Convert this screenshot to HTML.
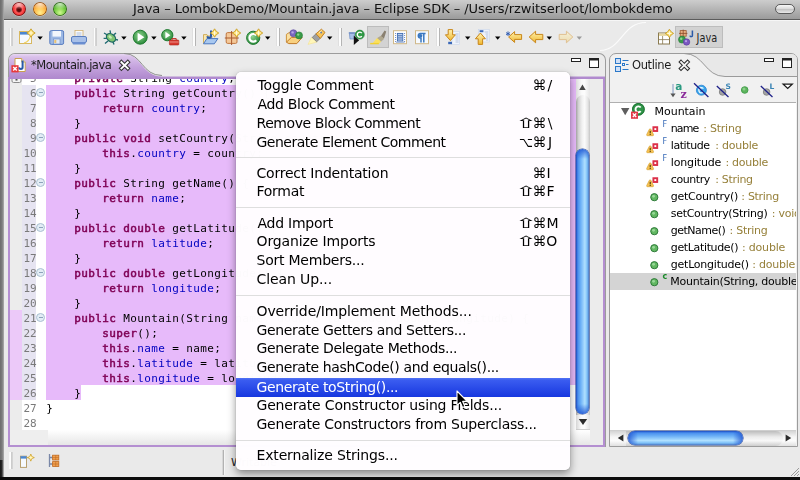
<!DOCTYPE html>
<html><head><meta charset="utf-8"><title>Java - LombokDemo/Mountain.java - Eclipse SDK</title>
<style>
*{box-sizing:border-box;margin:0;padding:0}
html,body{width:800px;height:480px;overflow:hidden;background:#e9e9e9}
body{font-family:"DejaVu Sans","Liberation Sans",sans-serif;color:#000}
.abs{position:absolute}
#menu,#edbody,#oltree,#title,#tablabel,#oltitle{will-change:transform}
i{font-style:normal}
#root{position:absolute;left:0;top:0;width:800px;height:480px;overflow:hidden;background:#eaeaea}
#titlebar{left:0;top:0;width:800px;height:20px;background:linear-gradient(#cdcdcd,#9b9b9b);border-bottom:1px solid #5c5c5c;box-shadow:0 1px 0 #f6f6f6}
#title{top:-0.6px;font-size:13px;line-height:19px;color:#111;white-space:nowrap;left:133.00px;letter-spacing:-0.071px}
.tl{position:absolute;top:2.2px;width:14px;height:14px;border-radius:50%}
#pill{left:774.5px;top:4px;width:20.5px;height:10px;border-radius:5px;border:1px solid #5a5a5a;background:linear-gradient(#f8f8f8,#d8d8d8 50%,#c4c4c4 55%,#e8e8e8)}
#leftedge{left:0;top:0;width:4px;height:480px;background:linear-gradient(to right,#6c6c6c,#7c7c7c 50%,#9a9a9a 85%,#c8c8c8)}
#bottomedge{left:0;top:477.3px;width:800px;height:3px;background:#0c0c0c}
/* editor */
#edframe{left:8px;top:53px;width:597.5px;height:394px;border:1px solid #9c9c9c;border-bottom:none;border-radius:7px 7px 0 0;background:#ebebeb;overflow:hidden}
#edpurple{left:8px;top:76.6px;width:597px;height:370.2px;background:#b48fd1}
#edbody{left:10px;top:79px;width:593px;height:366px;background:#fff;overflow:hidden}
#ruler{left:0;top:0;width:12px;height:366px;background:#ececec}
#numcol{left:12px;top:0;width:26px;height:366px;background:#fff}
#gutterbot{left:0;top:351px;width:38px;height:15px;background:#eee}
#edbot{left:38px;top:351px;width:555px;height:15px;background:linear-gradient(#fff,#e6e6e6)}
.row{position:absolute;left:0;width:566px;height:15px;line-height:15px;font-family:"DejaVu Sans Mono","Liberation Mono",monospace;font-size:11px;letter-spacing:.378px;white-space:pre}
.row .sel{position:absolute;top:0;height:15px;background:#e7bafa}
.row .lnbg{position:absolute;left:12px;top:0;width:14px;height:15px;background:#e6e4f1}
.row .num{position:absolute;top:1px;left:4.7px;width:22px;text-align:right;color:#7a7a7a;letter-spacing:-0.0px}
.row .tx{position:absolute;left:36.3px;top:1px}
.row .fold{position:absolute;left:26.3px;top:3px;width:9px;height:9px;border-radius:50%;border:1px solid #a9c0d2;background:#e3edf5}
.row .fold:after{content:"";position:absolute;left:1.5px;top:3px;width:4px;height:1px;background:#8ca4ba}
.k{color:#7f0055;-webkit-text-stroke:.5px #7f0055}
.f{color:#0000c0}
/* menu */
#menu{left:236px;top:72px;width:334px;height:398px;background:rgba(255,253,255,0.988);border-radius:5px;box-shadow:0 4px 9px rgba(0,0,0,0.42),0 0 1px rgba(0,0,0,0.45);font-size:14px;color:#000}
.mi{position:absolute;left:0;width:334px;height:19px;line-height:19px;padding-left:21px;white-space:nowrap;letter-spacing:-0.27px}
.mi .g{position:absolute;top:0;letter-spacing:0;display:block}
.mi .key{position:absolute;left:311px;top:0;letter-spacing:0}
.sep{position:absolute;left:0;width:334px;height:1px;background:#dedede}
.hl{background:linear-gradient(#5272f4,#3a5cf0 12%,#1737df);color:#fff;margin-top:.7px}
/* outline */
#olframe{left:609px;top:53px;width:189px;height:394px;border:1px solid #9c9c9c;border-radius:7px 7px 0 0;background:#f1f1f1;overflow:hidden}
#oltree{left:610px;top:102px;width:186px;height:328px;background:#fff;border-top:1px solid #b0b0b0;overflow:hidden;font-size:11px}
.orow{position:absolute;left:0;width:190px;height:17px;line-height:17px;white-space:nowrap}
.orow .osel{position:absolute;left:0;top:0;width:190px;height:17px;background:#d4d4d4}
.orow .otx{position:absolute;top:0;letter-spacing:-0.25px}
.orow .ty{color:#96803a}
.orow .oic{position:absolute}
.orow .tri{position:absolute;left:10.6px;top:5.4px}
.orow .sup{position:absolute;left:52.4px;top:-4px;font-size:8px}
#tablabel{top:57.55px;font-size:11.5px;line-height:15px;color:#1c1c1c;white-space:nowrap;left:30.90px;letter-spacing:-0.485px}
#oltitle{top:57.55px;font-size:11.5px;line-height:15px;color:#1c1c1c;white-space:nowrap;left:632.00px;letter-spacing:-0.4px}
/* status */
</style></head><body><div id="root">
<div id="titlebar" class="abs"></div>
<div id="title" class="abs">Java – LombokDemo/Mountain.java – Eclipse SDK – /Users/rzwitserloot/lombokdemo</div>
<i class="tl" style="left:11.5px;background:radial-gradient(ellipse 60% 38% at 50% 14%,rgba(255,255,255,.7),rgba(255,255,255,0) 100%),radial-gradient(circle at 50% 54%,#4a0808 0,#6a1010 20%,#ff5a5a 34%,#f03030 55%,#c01818 80%,#8a0e0e 100%);box-shadow:0 0 0 .8px #6a1414 inset,0 .5px 0 rgba(255,255,255,.5)"></i>
<i class="tl" style="left:32.5px;background:radial-gradient(ellipse 60% 38% at 50% 14%,rgba(255,255,255,.75),rgba(255,255,255,0) 100%),radial-gradient(circle at 50% 75%,#fff090 0,#ffc050 40%,#f09028 70%,#b05a10 100%);box-shadow:0 0 0 .8px #8a4a10 inset,0 .5px 0 rgba(255,255,255,.5)"></i>
<i class="tl" style="left:53.2px;background:radial-gradient(ellipse 60% 38% at 50% 14%,rgba(255,255,255,.7),rgba(255,255,255,0) 100%),radial-gradient(circle at 50% 75%,#d0f890 0,#7cd048 40%,#48a828 70%,#226014 100%);box-shadow:0 0 0 .8px #2a5a18 inset,0 .5px 0 rgba(255,255,255,.5)"></i>
<div id="pill" class="abs"></div>
<div id="leftedge" class="abs"></div><div class="abs" style="left:0;top:459.5px;width:3.2px;height:21px;background:linear-gradient(to right,#161616,#2a2a2a 70%,#8a8a8a)"></div>
<svg class="abs" style="left:0;top:21px" width="800" height="33" viewBox="0 21 800 33">
<defs>
<linearGradient id="gy" x1="0" y1="0" x2="0" y2="1"><stop offset="0" stop-color="#fff2b0"/><stop offset="1" stop-color="#f0b830"/></linearGradient>
<linearGradient id="gyf" x1="0" y1="0" x2="0" y2="1"><stop offset="0" stop-color="#f6f0d8"/><stop offset="1" stop-color="#ecdcb0"/></linearGradient>
<radialGradient id="gg" cx=".45" cy=".4" r=".6"><stop offset="0" stop-color="#8fd48f"/><stop offset="1" stop-color="#2a8a3a"/></radialGradient>
<linearGradient id="gb" x1="0" y1="0" x2="0" y2="1"><stop offset="0" stop-color="#a8c4ea"/><stop offset="1" stop-color="#5a86c8"/></linearGradient>
<g id="hd"><rect x="0" y="0" width="2" height="18" fill="#fdfdfd"/><rect x="2" y="0" width="1" height="18" fill="#b4b4b4"/><rect x="-.6" y="0" width=".6" height="18" fill="#d8d8d8"/></g>
<path id="dd" d="M0 0h5.4l-2.7 3.4z"/>
<g id="spark"><path d="M0 -4.2L1.7 -1.7L4.2 0L1.7 1.7L0 4.2L-1.7 1.7L-4.2 0L-1.7 -1.7z" fill="#fbd858" stroke="#c49a28" stroke-width=".8" stroke-linejoin="round"/><path d="M0 -2.2v4.4M-2.2 0h4.4" stroke="#fffbe0" stroke-width="1.1"/></g>
</defs>
<!-- handles -->
<use href="#hd" x="9.5" y="28"/><use href="#hd" x="93.5" y="28"/><use href="#hd" x="193" y="28"/><use href="#hd" x="277" y="28"/><use href="#hd" x="339" y="28"/><use href="#hd" x="437" y="28"/>
<!-- new -->
<rect x="19.5" y="31.5" width="12" height="12" fill="#f4f9ff" stroke="#d8b860" stroke-width="1"/><rect x="20" y="32" width="11" height="2.6" fill="#4a86d0"/><path d="M24 43c4-1 6-4 6.5-8" fill="none" stroke="#f0d060" stroke-width="1.2"/>
<use href="#spark" x="31" y="33"/>
<use href="#dd" x="37.4" y="36.4"/>
<!-- save -->
<rect x="49.8" y="30.6" width="13.8" height="13.8" rx="1.5" fill="#9cb8e4" stroke="#5a7ec0" stroke-width="1"/><rect x="52.5" y="31" width="8.5" height="5.6" fill="#f2f6fc"/><rect x="53.5" y="39" width="6.5" height="5" fill="#dfe8f6" stroke="#6a8ac4" stroke-width=".6"/><rect x="54.3" y="40" width="2" height="3" fill="#e8c070"/>
<!-- print -->
<rect x="75" y="30.5" width="8" height="7" fill="#fafafa" stroke="#d0b070" stroke-width=".8"/><path d="M76.5 33h5M76.5 35h5" stroke="#9ab0d8" stroke-width=".8"/><rect x="71.5" y="36.5" width="15" height="6" rx="1.5" fill="#a8c0e8" stroke="#5a7ec0" stroke-width="1"/><rect x="72.5" y="42" width="13" height="2.6" rx="1" fill="#6a8ed0"/>
<!-- debug bug -->
<g stroke="#1f6a72" stroke-width="1.35" fill="none"><path d="M104 33l3.5 2M103.6 38.4h3.6M105 43.6l3-2.6M110 30.4l.6 3.2M116 33l-2 1.6M118 40l-3-.6M114 44.6l-1.2-3"/></g>
<ellipse cx="111" cy="37.8" rx="5" ry="3.7" transform="rotate(38 111 37.8)" fill="#80c472" stroke="#1f6a62" stroke-width="1.3"/><ellipse cx="110.2" cy="37" rx="2" ry="1.2" transform="rotate(38 110.2 37)" fill="#c8ecb8"/>
<use href="#dd" x="121.2" y="36.4"/>
<!-- run -->
<circle cx="140.2" cy="37.2" r="7" fill="url(#gg)" stroke="#1f7a30" stroke-width="1"/><path d="M137.6 32.8v8.8l6.8-4.4z" fill="#fff"/>
<use href="#dd" x="151.2" y="36.4"/>
<!-- run ext -->
<circle cx="167.3" cy="35.2" r="5.6" fill="url(#gg)" stroke="#1f7a30" stroke-width="1"/><path d="M165.4 31.8v6.8l5-3.4z" fill="#fff"/>
<rect x="169.4" y="40" width="9.4" height="5" rx=".8" fill="#d83a30" stroke="#a82018" stroke-width=".6"/><path d="M172 40v-1.4h4.2V40" fill="none" stroke="#c02a22" stroke-width="1"/><rect x="169.6" y="41.6" width="9" height=".8" fill="#f0a8a0"/>
<use href="#dd" x="181.2" y="36.4"/>
<!-- new java project -->
<path d="M203.5 43.6v-9h3.4l1 1.4h4v3" fill="#fbe8b0" stroke="#c8a040" stroke-width=".8"/><path d="M203.5 43.8l3.4-5.2h11l-3.6 5.2z" fill="#a8c8f0" stroke="#4a78c0" stroke-width="1"/><path d="M211 30.4v5.6c0 2.2-3.4 2.2-3.8 .2" fill="none" stroke="#2a5aa8" stroke-width="2"/>
<use href="#spark" x="214.6" y="33"/>
<!-- new package -->
<rect x="226.2" y="32.6" width="10.8" height="10.8" rx="1.4" fill="#f4c898" stroke="#c07840" stroke-width="1"/><path d="M231.6 31v14M224.8 38h14" stroke="#a85a30" stroke-width="1"/>
<use href="#spark" x="236.6" y="33"/>
<!-- new class -->
<circle cx="253.2" cy="37.8" r="6.6" fill="url(#gg)" stroke="#1f7a30" stroke-width="1"/><path d="M256.2 35.4a3.8 3.8 0 1 0 0 4.8" fill="none" stroke="#fff" stroke-width="2.2"/>
<use href="#spark" x="258.6" y="33"/>
<use href="#dd" x="265" y="36.4"/>
<!-- open type -->
<path d="M286.4 42v-7.6l4-2.6h6l-1 3.6" fill="#fbe0a0" stroke="#c88a30" stroke-width=".9"/><path d="M286.4 42.2l5-4.8h10.8l-5.4 6.2h-8z" fill="#f8d080" stroke="#c07a28" stroke-width="1"/>
<circle cx="293.4" cy="33.2" r="3.5" fill="#7a68c0" stroke="#5a48a0" stroke-width=".6"/><circle cx="292.6" cy="32.4" r="1.2" fill="#b8a8e8"/>
<circle cx="299" cy="35.4" r="3.5" fill="#3a9a4a" stroke="#1f7a30" stroke-width=".6"/><circle cx="298.2" cy="34.6" r="1.2" fill="#8fd48f"/>
<!-- flashlight -->
<path d="M308 44.4l3.6-7.4 5.6 5z" fill="#fff6b8" stroke="#f4e090" stroke-width=".6"/><path d="M312.2 37.4l3.8-3.6 4.4 4.4-3.8 3.6z" fill="#a0a0a0" stroke="#6e6e6e" stroke-width=".7"/><path d="M316 33.8l5.4-4.6 3.6 3.2-4.6 6z" fill="#f7c45a" stroke="#c08228" stroke-width="1" stroke-linejoin="round"/><path d="M319 32.8l2.6-2.2" stroke="#fff0c0" stroke-width="1"/><rect x="320.4" y="31.8" width="1.5" height="1.5" fill="#4a78c0"/>
<use href="#dd" x="327" y="36.4"/>
<!-- toggle C -->
<path d="M349.4 33.4h5.4l-.6 5.6h-4.2z" fill="#a8c0e8" stroke="#6a8ac4" stroke-width=".7"/><rect x="348.8" y="32.2" width="6.6" height="1.4" fill="#6a8ac4"/>
<path d="M353.8 35.6v9.4l5.4-4.7z" fill="#111"/>
<circle cx="359.8" cy="34.6" r="4.5" fill="#2f9a45" stroke="#1f7a30" stroke-width=".6"/><path d="M361.8 33.1a2.5 2.5 0 1 0 0 3" fill="none" stroke="#fff" stroke-width="1.4"/>
<!-- mark occurrences (pressed) -->
<rect x="367.5" y="26.5" width="21" height="21" fill="#d3d3d3" stroke="#bcbcbc" stroke-width="1"/>
<path d="M380.6 36.6l4-6 1.6 1-2.2 7z" fill="#8a8070"/><path d="M376.8 38.2l4-2.4 3.4 3-3.4 3.2z" fill="#b0a890"/><path d="M372 44l5-6 4 3.6-2 2.4z" fill="#fbe060"/><path d="M370.2 43.6h8.6" stroke="#f0d030" stroke-width="1.4"/>
<!-- block selection -->
<rect x="393.5" y="30.7" width="13" height="13" fill="#fff" stroke="#d0b888" stroke-width="1"/><rect x="397.4" y="33.4" width="5.4" height="7.6" fill="#c8d8f0" stroke="#3a68b0" stroke-width=".9"/><path d="M398 35.4h4.4M398 37.2h4.4M398 39h4.4" stroke="#3a68b0" stroke-width=".8"/><path d="M395.6 33v9M404.6 33v9" stroke="#6a8ac4" stroke-width="1" stroke-dasharray="1 1"/><path d="M396 42.2h8.6" stroke="#6a8ac4" stroke-width=".8"/>
<!-- pilcrow -->
<rect x="415.5" y="30.7" width="13" height="13" fill="#f6faff" stroke="#d0b888" stroke-width="1"/><path d="M423 33.4h-2.4a2.3 2.3 0 0 0 0 4.6h.4v4.4M423.8 33.4v9M419.6 33.6h6" fill="none" stroke="#3a78c0" stroke-width="1.5"/><circle cx="420.6" cy="35.7" r="1.8" fill="#3a78c0"/>
<!-- next annotation -->
<rect x="452" y="31.6" width="7.6" height="13" fill="#eef3fa" stroke="#c8d4e8" stroke-width=".6"/><path d="M455.6 34h3M455.6 36h3M455.6 38h3M455.6 40h3M455.6 42h3" stroke="#a8b8d8" stroke-width=".8"/>
<path d="M448.2 29.6h4.4v5.2h2.8l-5 5.8-5-5.8h2.8z" fill="url(#gy)" stroke="#c8861a" stroke-width="1" stroke-linejoin="round"/><rect x="448.2" y="41.8" width="3.8" height="2.4" fill="#3a68b8"/>
<use href="#dd" x="465" y="36.4"/>
<!-- prev annotation -->
<rect x="478.6" y="29.4" width="10.6" height="12.6" fill="#eef3fa" stroke="#c8d4e8" stroke-width=".6"/><path d="M484.6 32h3.6M485.6 34h2.6M486 36h2.2M486 38h2.2M486 40h2.2" stroke="#a8b8d8" stroke-width=".8"/><rect x="479.6" y="30.2" width="3.8" height="2" fill="#3a68b8"/>
<path d="M480.4 33l5 5.8h-2.8v5.6h-4.4v-5.6h-2.8z" fill="url(#gy)" stroke="#c8861a" stroke-width="1" stroke-linejoin="round"/>
<use href="#dd" x="495" y="36.4"/>
<!-- last edit -->
<path d="M508.6 37l6-5.4v3h7v4.8h-7v3z" fill="url(#gy)" stroke="#c8861a" stroke-width="1" stroke-linejoin="round"/><path d="M508 31.4v4.6M506 32.6l4 2.3M506 34.9l4-2.3" stroke="#2a58b0" stroke-width=".9"/>
<!-- back -->
<path d="M529.2 37l6.4-5.8v3.2h7.2v5.2h-7.2v3.2z" fill="url(#gy)" stroke="#c8861a" stroke-width="1" stroke-linejoin="round"/>
<use href="#dd" x="546.6" y="36.4"/>
<!-- forward (disabled) -->
<path d="M572.8 37l-6.4-5.8v3.2h-7.2v5.2h7.2v3.2z" fill="url(#gyf)" stroke="#e0c090" stroke-width="1" stroke-linejoin="round"/>
<use href="#dd" x="576.6" y="36.4" fill="#9a9a9a"/>
<!-- perspective curve -->
<path d="M600 50.5C622 50 622 22.5 646 22.5" fill="none" stroke="#fbfbfb" stroke-width="1.2"/>
<!-- open perspective -->
<rect x="658.5" y="33" width="11" height="11" fill="#fff" stroke="#8a7a50" stroke-width="1"/><rect x="659" y="33.5" width="10" height="2.4" fill="#e8d8a0"/><path d="M662.6 36v8M659 39.6h10" stroke="#8a7a50" stroke-width=".8"/>
<use href="#spark" x="669.4" y="33.4"/>
<!-- Java perspective button -->
<rect x="675.5" y="26.5" width="47" height="21" fill="#d2d2d2" stroke="#bdbdbd" stroke-width="1"/>
<rect x="680.2" y="30.6" width="6" height="5.6" fill="#e8b080" stroke="#a05a30" stroke-width=".8"/><path d="M683.2 29.6v7.6M679 33.4h8.4" stroke="#8a4a28" stroke-width=".8"/>
<circle cx="682" cy="39.6" r="3.5" fill="#3a9a4a" stroke="#1f7a30" stroke-width=".6"/><circle cx="681.2" cy="38.8" r="1.2" fill="#8fd48f"/>
<circle cx="686.6" cy="42" r="3.2" fill="#7a58c0" stroke="#5a3aa0" stroke-width=".6"/><circle cx="686" cy="41.2" r="1.1" fill="#b8a0e8"/>
<path d="M692.4 30.4v5c0 1.6-2.2 1.6-2.4.2" fill="none" stroke="#2a5aa8" stroke-width="1.5"/>
<text x="696.6" y="41.6" font-family="DejaVu Sans, Liberation Sans, sans-serif" font-size="11.5" fill="#222" textLength="20.6" lengthAdjust="spacingAndGlyphs">Java</text>
</svg>

<div id="edframe" class="abs"></div>
<div id="edpurple" class="abs"></div>
<svg class="abs" style="left:0;top:50px" width="800" height="32" viewBox="0 50 800 32">
<defs><linearGradient id="tg" x1="0" y1="54" x2="0" y2="78" gradientUnits="userSpaceOnUse"><stop offset="0" stop-color="#e8d6f3"/><stop offset=".12" stop-color="#d9c0ea"/><stop offset=".55" stop-color="#c4a2dd"/><stop offset="1" stop-color="#b08ace"/></linearGradient></defs>
<path d="M9 79V60.5Q9 54 15.5 54H124C142 54 141 76 162 76.6H605V79z" fill="url(#tg)"/>
<path d="M124 53.5C142.5 53.5 141.5 75.5 162 75.5" fill="none" stroke="#8f8f8f" stroke-width="1"/>
<!-- file icon -->
<path d="M15 58.5h6.6l3.6 3.6v9.4h-10.2z" fill="#fff" stroke="#c8a050" stroke-width="1"/><path d="M21.6 58.5v3.6h3.6" fill="#f4e4b8" stroke="#c8a050" stroke-width=".8"/>
<path d="M22.6 60.6v6.6c0 2.4-3.4 2.4-3.6 .2" fill="none" stroke="#2a5aa8" stroke-width="2"/>
<rect x="11.4" y="65.2" width="7.2" height="7.2" fill="#e8383c"/><path d="M13.2 67l3.6 3.6m0-3.6l-3.6 3.6" stroke="#fff" stroke-width="1.4"/>
<!-- close X -->
<path d="M121.4 62.2l6.4 6.2M127.8 62.2l-6.4 6.2" stroke="#333" stroke-width="4" stroke-linecap="square"/><path d="M121.4 62.2l6.4 6.2M127.8 62.2l-6.4 6.2" stroke="#fff" stroke-width="1.9" stroke-linecap="square"/>
<!-- min / max -->
<rect x="571.5" y="58.5" width="9" height="3" fill="#fff" stroke="#222" stroke-width="1"/>
<rect x="589.5" y="58.5" width="9" height="9" fill="#fff" stroke="#222" stroke-width="1"/><rect x="589.5" y="58.5" width="9" height="2" fill="#222"/>
</svg>
<div id="tablabel" class="abs">*Mountain.java</div>

<div id="edbody" class="abs">
<div id="ruler" class="abs"></div><div id="numcol" class="abs"></div>
<div id="gutterbot" class="abs"></div><div id="edbot" class="abs"></div>
<div class="row" style="top:-9px"><i class="sel" style="left:226px;right:0"></i><span class="num">5</span><span class="tx">    <span class="k">private</span> String <span class="f">country</span>;</span></div>
<div class="row" style="top:6px"><i class="lnbg"></i><i class="sel" style="left:36.2px;right:0"></i><span class="num">6</span><i class="fold"></i><span class="tx">    <span class="k">public</span> String getCountry() {</span></div>
<div class="row" style="top:21px"><i class="lnbg"></i><i class="sel" style="left:36.2px;right:0"></i><span class="num">7</span><span class="tx">        <span class="k">return</span> <span class="f">country</span>;</span></div>
<div class="row" style="top:36px"><i class="lnbg"></i><i class="sel" style="left:36.2px;right:0"></i><span class="num">8</span><span class="tx">    }</span></div>
<div class="row" style="top:51px"><i class="lnbg"></i><i class="sel" style="left:36.2px;right:0"></i><span class="num">9</span><i class="fold"></i><span class="tx">    <span class="k">public</span> <span class="k">void</span> setCountry(String country) {</span></div>
<div class="row" style="top:66px"><i class="lnbg"></i><i class="sel" style="left:36.2px;right:0"></i><span class="num">10</span><span class="tx">        <span class="k">this</span>.<span class="f">country</span> = country;</span></div>
<div class="row" style="top:81px"><i class="lnbg"></i><i class="sel" style="left:36.2px;right:0"></i><span class="num">11</span><span class="tx">    }</span></div>
<div class="row" style="top:96px"><i class="lnbg"></i><i class="sel" style="left:36.2px;right:0"></i><span class="num">12</span><i class="fold"></i><span class="tx">    <span class="k">public</span> String getName() {</span></div>
<div class="row" style="top:111px"><i class="lnbg"></i><i class="sel" style="left:36.2px;right:0"></i><span class="num">13</span><span class="tx">        <span class="k">return</span> <span class="f">name</span>;</span></div>
<div class="row" style="top:126px"><i class="lnbg"></i><i class="sel" style="left:36.2px;right:0"></i><span class="num">14</span><span class="tx">    }</span></div>
<div class="row" style="top:141px"><i class="lnbg"></i><i class="sel" style="left:36.2px;right:0"></i><span class="num">15</span><i class="fold"></i><span class="tx">    <span class="k">public</span> <span class="k">double</span> getLatitude() {</span></div>
<div class="row" style="top:156px"><i class="lnbg"></i><i class="sel" style="left:36.2px;right:0"></i><span class="num">16</span><span class="tx">        <span class="k">return</span> <span class="f">latitude</span>;</span></div>
<div class="row" style="top:171px"><i class="lnbg"></i><i class="sel" style="left:36.2px;right:0"></i><span class="num">17</span><span class="tx">    }</span></div>
<div class="row" style="top:186px"><i class="lnbg"></i><i class="sel" style="left:36.2px;right:0"></i><span class="num">18</span><i class="fold"></i><span class="tx">    <span class="k">public</span> <span class="k">double</span> getLongitude() {</span></div>
<div class="row" style="top:201px"><i class="lnbg"></i><i class="sel" style="left:36.2px;right:0"></i><span class="num">19</span><span class="tx">        <span class="k">return</span> <span class="f">longitude</span>;</span></div>
<div class="row" style="top:216px"><i class="lnbg"></i><i class="sel" style="left:36.2px;right:0"></i><span class="num">20</span><span class="tx">    }</span></div>
<div class="row" style="top:231px"><i class="lnbg"></i><i class="sel" style="left:36.2px;right:0"></i><span class="num">21</span><i class="fold"></i><span class="tx">    <span class="k">public</span> Mountain(String name, double latitude, double longitude) {</span></div>
<div class="row" style="top:246px"><i class="lnbg"></i><i class="sel" style="left:36.2px;right:0"></i><span class="num">22</span><span class="tx">        <span class="k">super</span>();</span></div>
<div class="row" style="top:261px"><i class="lnbg"></i><i class="sel" style="left:36.2px;right:0"></i><span class="num">23</span><span class="tx">        <span class="k">this</span>.<span class="f">name</span> = name;</span></div>
<div class="row" style="top:276px"><i class="lnbg"></i><i class="sel" style="left:36.2px;right:0"></i><span class="num">24</span><span class="tx">        <span class="k">this</span>.<span class="f">latitude</span> = latitude;</span></div>
<div class="row" style="top:291px"><i class="lnbg"></i><i class="sel" style="left:36.2px;right:0"></i><span class="num">25</span><span class="tx">        <span class="k">this</span>.<span class="f">longitude</span> = longitude;</span></div>
<div class="row" style="top:306px"><i class="lnbg"></i><i class="sel" style="left:36.2px;width:35px"></i><span class="num">26</span><span class="tx">    }</span></div>
<div class="row" style="top:321px"><span class="num">27</span><span class="tx">}</span></div>
<div class="row" style="top:336px"><span class="num">28</span><span class="tx"></span></div>
<div class="abs" style="left:566px;top:0;width:14px;height:351px;background:linear-gradient(to right,#e0e0e0,#fafafa 40%,#fdfdfd 60%,#e6e6e6)"></div>
<div class="abs" style="left:566px;top:16px;width:14px;height:320px;border-radius:7px 7px 0 0;background:linear-gradient(to right,#a8a8a8,#d4d4d4 18%,#f2f2f2 45%,#fbfbfb 62%,#e4e4e4 85%,#c4c4c4)"></div>
<div class="abs" style="left:566px;top:335.5px;width:14px;height:15.5px;background:linear-gradient(to right,#dcdcdc,#fbfbfb 40%,#fdfdfd 60%,#e2e2e2);border-bottom:1px solid #d0d0d0"></div>
<div class="abs" style="left:566.2px;top:69.6px;width:12.6px;height:265px;border-radius:6.3px;background:linear-gradient(to bottom,rgba(30,84,210,.85),rgba(30,84,210,0) 10px,rgba(30,84,210,0) calc(100% - 10px),rgba(30,84,210,.85)),linear-gradient(to right,#1c4cc4 0,#4a90ee 14%,#6cb0f6 36%,#b0e0ff 68%,#7cc0f8 86%,#4a78c4 100%);box-shadow:0 0 0 .6px #34509a"></div>
<svg class="abs" style="left:566px;top:0" width="14" height="351"><path d="M3.2 10.9h6.5l-3.25-5.4z" fill="#484848"/><path d="M2.8 340h8.4l-4.2 6z" fill="#2c2c2c"/></svg>
<div class="abs" style="left:580px;top:0;width:13px;height:366px;background:#ececec"></div>
<svg class="abs" style="left:1px;top:0" width="12" height="5"><rect x="1" y="-3" width="9" height="6.5" rx="1.5" fill="#f4f4f4" stroke="#8a8a8a" stroke-width="1"/><rect x="4.5" y="0" width="2" height="1.6" fill="#555"/></svg>
<div class="abs" style="left:0;top:231px;width:12px;height:90px;background:#ecc9f9"></div>
</div>
<div id="olframe" class="abs"></div>
<svg class="abs" style="left:600px;top:50px" width="200" height="54" viewBox="600 50 200 54">
<path d="M684 54C704 54 704 76.5 725 76.5H797V60Q797 54 791 54z" fill="#e8e8e8"/>
<path d="M684 53.5C704.5 53.5 704.5 76.5 725 76.5H797" fill="none" stroke="#9a9a9a" stroke-width="1"/>
<!-- outline icon -->
<rect x="615.5" y="58.5" width="5" height="5" fill="#cfe0f8" stroke="#2a78c8" stroke-width="1"/><rect x="615.5" y="66.5" width="5" height="5" fill="#cfe0f8" stroke="#2a78c8" stroke-width="1"/><rect x="622.5" y="63.5" width="2" height="2" fill="#fff" stroke="#2a78c8" stroke-width="1"/>
<path d="M622.5 60.5h6M626 64.5h2.5M622.5 69.5h6" stroke="#2a78c8" stroke-width="1.2"/>
<!-- close -->
<path d="M681 62l6.6 6.6M687.6 62l-6.6 6.6" stroke="#2a2a2a" stroke-width="3.8" stroke-linecap="square"/><path d="M681 62l6.6 6.6M687.6 62l-6.6 6.6" stroke="#f4f4f4" stroke-width="1.8" stroke-linecap="square"/>
<!-- min/max -->
<rect x="764.5" y="58.5" width="9" height="3" fill="#fff" stroke="#222" stroke-width="1"/>
<rect x="782.5" y="58.5" width="9" height="9" fill="#fff" stroke="#222" stroke-width="1"/><rect x="782.5" y="58.5" width="9" height="2" fill="#222"/>
<!-- sort -->
<path d="M673 84v10" fill="none" stroke="#7f98c0" stroke-width="1"/><path d="M670.4 93.6h5.2l-2.6 3.6z" fill="#555"/>
<text x="675.2" y="89.8" font-family="DejaVu Sans, Liberation Sans, sans-serif" font-weight="bold" font-size="10.5" fill="#2a9a80">a</text>
<text x="680.4" y="97.8" font-family="DejaVu Serif, Liberation Serif, serif" font-weight="bold" font-size="11" fill="#8a2a9a">z</text>
<!-- hide fields -->
<circle cx="701.4" cy="90.2" r="5" fill="#38a4ea" stroke="#2a80d0" stroke-width=".8"/><circle cx="700" cy="88.6" r="2" fill="#9adcff" opacity=".8"/><path d="M703.4 88.6a2.6 2.6 0 1 0 0 3.4" fill="none" stroke="#e8f8ff" stroke-width="1.3"/><path d="M694 83.2l14.4 13.8" stroke="#1e2088" stroke-width="1.3"/>
<!-- hide static -->
<circle cx="722.6" cy="92" r="3.3" fill="#a4a4a4" stroke="#7c7c7c" stroke-width=".8"/><path d="M716.8 86l11.7 11" stroke="#1e2088" stroke-width="1.3"/>
<text x="725.4" y="88.8" font-family="DejaVu Sans, sans-serif" font-weight="bold" font-size="7.5" fill="#3a84b4">S</text>
<!-- green dot -->
<circle cx="744.7" cy="90" r="3.3" fill="#5cb45c" stroke="#48a050" stroke-width="1"/><circle cx="744" cy="89" r="1.5" fill="#a0dca0" opacity=".7"/>
<!-- hide local -->
<circle cx="766.6" cy="92" r="3.3" fill="#a4a4a4" stroke="#7c7c7c" stroke-width=".8"/><path d="M760.8 86l11.7 11" stroke="#1e2088" stroke-width="1.3"/>
<text x="769.6" y="88.8" font-family="DejaVu Sans, sans-serif" font-weight="bold" font-size="7.5" fill="#3a84b4">L</text>
<!-- view menu -->
<path d="M783.2 84.2h9l-4.5 4.2z" fill="#fff" stroke="#1a1a1a" stroke-width="1.3" stroke-linejoin="miter"/>
</svg>
<div id="oltitle" class="abs">Outline</div>
<div id="oltree" class="abs">
<div class="orow" style="top:0px"><svg class="tri" width="9" height="8" viewBox="0 0 9 8"><path d="M0 0h8.4l-4.2 7.2z" fill="#5e5e5e"/></svg><svg class="oic" style="left:20px;top:0" width="18" height="17" viewBox="0 0 18 17"><circle cx="8.4" cy="6.3" r="6.3" fill="#2f9448"/><circle cx="8.4" cy="6.3" r="5.8" fill="none" stroke="#1f7434" stroke-width="1"/><path d="M10.7 4.5a2.9 2.9 0 1 0 0 3.6" fill="none" stroke="#fff" stroke-width="1.9"/><rect x="1" y="8.6" width="7" height="7.2" fill="#e23a48"/><path d="M2.8 10.4l3.4 3.6m0-3.6l-3.4 3.6" stroke="#fff" stroke-width="1.3"/></svg><span class="otx" style="left:44.60px;letter-spacing:-0.043px">Mountain</span></div>
<div class="orow" style="top:17px"><svg class="oic" style="left:35px;top:5.5px" width="14" height="12" viewBox="0 0 14 12"><rect x="8.4" y="1.2" width="3.8" height="3.8" fill="#fff" stroke="#dc3048" stroke-width="1.9"/><path d="M5.2 2.8c.3 0 .5.2.7.5l2.6 5.2c.3.6 0 1.2-.7 1.2h-5.4c-.7 0-1-.6-.7-1.2l2.6-5.2c.2-.3.5-.5.9-.5z" fill="#f7c252" stroke="#d09a28" stroke-width=".6"/><rect x="4.7" y="4.8" width="1" height="2.6" fill="#3a2a00"/><rect x="4.7" y="8" width="1" height="1" fill="#3a2a00"/></svg><span class="sup" style="color:#3a6cb8">F</span><span class="otx" style="left:60.80px;letter-spacing:-0.933px">name</span><span class="otx ty" style="left:93.30px;letter-spacing:-0.243px">: String</span></div>
<div class="orow" style="top:34px"><svg class="oic" style="left:35px;top:5.5px" width="14" height="12" viewBox="0 0 14 12"><rect x="8.4" y="1.2" width="3.8" height="3.8" fill="#fff" stroke="#dc3048" stroke-width="1.9"/><path d="M5.2 2.8c.3 0 .5.2.7.5l2.6 5.2c.3.6 0 1.2-.7 1.2h-5.4c-.7 0-1-.6-.7-1.2l2.6-5.2c.2-.3.5-.5.9-.5z" fill="#f7c252" stroke="#d09a28" stroke-width=".6"/><rect x="4.7" y="4.8" width="1" height="2.6" fill="#3a2a00"/><rect x="4.7" y="8" width="1" height="1" fill="#3a2a00"/></svg><span class="sup" style="color:#3a6cb8">F</span><span class="otx" style="left:60.80px;letter-spacing:-0.429px">latitude</span><span class="otx ty" style="left:105.20px;letter-spacing:-0.214px">: double</span></div>
<div class="orow" style="top:51px"><svg class="oic" style="left:35px;top:5.5px" width="14" height="12" viewBox="0 0 14 12"><rect x="8.4" y="1.2" width="3.8" height="3.8" fill="#fff" stroke="#dc3048" stroke-width="1.9"/><path d="M5.2 2.8c.3 0 .5.2.7.5l2.6 5.2c.3.6 0 1.2-.7 1.2h-5.4c-.7 0-1-.6-.7-1.2l2.6-5.2c.2-.3.5-.5.9-.5z" fill="#f7c252" stroke="#d09a28" stroke-width=".6"/><rect x="4.7" y="4.8" width="1" height="2.6" fill="#3a2a00"/><rect x="4.7" y="8" width="1" height="1" fill="#3a2a00"/></svg><span class="sup" style="color:#3a6cb8">F</span><span class="otx" style="left:60.80px;letter-spacing:-0.162px">longitude</span><span class="otx ty" style="left:115.40px;letter-spacing:-0.271px">: double</span></div>
<div class="orow" style="top:68px"><svg class="oic" style="left:35px;top:5.5px" width="14" height="12" viewBox="0 0 14 12"><rect x="8.4" y="1.2" width="3.8" height="3.8" fill="#fff" stroke="#dc3048" stroke-width="1.9"/><path d="M5.2 2.8c.3 0 .5.2.7.5l2.6 5.2c.3.6 0 1.2-.7 1.2h-5.4c-.7 0-1-.6-.7-1.2l2.6-5.2c.2-.3.5-.5.9-.5z" fill="#f7c252" stroke="#d09a28" stroke-width=".6"/><rect x="4.7" y="4.8" width="1" height="2.6" fill="#3a2a00"/><rect x="4.7" y="8" width="1" height="1" fill="#3a2a00"/></svg><span class="otx" style="left:60.80px;letter-spacing:-0.433px">country</span><span class="otx ty" style="left:105.20px;letter-spacing:-0.314px">: String</span></div>
<div class="orow" style="top:85px"><svg class="oic" style="left:39px;top:4px" width="10" height="10" viewBox="0 0 10 10"><circle cx="5.3" cy="5.2" r="3.6" fill="#62b862" stroke="#2f7a3a" stroke-width="1"/><circle cx="4.6" cy="4.3" r="1.4" fill="#a8e0a8" opacity=".8"/></svg><span class="otx" style="left:60.80px;letter-spacing:-0.255px">getCountry()</span><span class="otx ty" style="left:131.30px;letter-spacing:-0.3px">: String</span></div>
<div class="orow" style="top:102px"><svg class="oic" style="left:39px;top:4px" width="10" height="10" viewBox="0 0 10 10"><circle cx="5.3" cy="5.2" r="3.6" fill="#62b862" stroke="#2f7a3a" stroke-width="1"/><circle cx="4.6" cy="4.3" r="1.4" fill="#a8e0a8" opacity=".8"/></svg><span class="otx" style="left:60.80px;letter-spacing:-0.294px">setCountry(String)</span><span class="otx ty" style="left:161.70px;letter-spacing:-0.25px">: void</span></div>
<div class="orow" style="top:119px"><svg class="oic" style="left:39px;top:4px" width="10" height="10" viewBox="0 0 10 10"><circle cx="5.3" cy="5.2" r="3.6" fill="#62b862" stroke="#2f7a3a" stroke-width="1"/><circle cx="4.6" cy="4.3" r="1.4" fill="#a8e0a8" opacity=".8"/></svg><span class="otx" style="left:60.80px;letter-spacing:-0.512px">getName()</span><span class="otx ty" style="left:119.40px;letter-spacing:-0.229px">: String</span></div>
<div class="orow" style="top:136px"><svg class="oic" style="left:39px;top:4px" width="10" height="10" viewBox="0 0 10 10"><circle cx="5.3" cy="5.2" r="3.6" fill="#62b862" stroke="#2f7a3a" stroke-width="1"/><circle cx="4.6" cy="4.3" r="1.4" fill="#a8e0a8" opacity=".8"/></svg><span class="otx" style="left:60.80px;letter-spacing:-0.35px">getLatitude()</span><span class="otx ty" style="left:132.00px;letter-spacing:-0.2px">: double</span></div>
<div class="orow" style="top:153px"><svg class="oic" style="left:39px;top:4px" width="10" height="10" viewBox="0 0 10 10"><circle cx="5.3" cy="5.2" r="3.6" fill="#62b862" stroke="#2f7a3a" stroke-width="1"/><circle cx="4.6" cy="4.3" r="1.4" fill="#a8e0a8" opacity=".8"/></svg><span class="otx" style="left:60.80px;letter-spacing:-0.231px">getLongitude()</span><span class="otx ty" style="left:142.20px;letter-spacing:-0.229px">: double</span></div>
<div class="orow" style="top:170px"><i class="osel"></i><svg class="oic" style="left:39px;top:4px" width="10" height="10" viewBox="0 0 10 10"><circle cx="5.3" cy="5.2" r="3.6" fill="#62b862" stroke="#2f7a3a" stroke-width="1"/><circle cx="4.6" cy="4.3" r="1.4" fill="#a8e0a8" opacity=".8"/></svg><span class="sup" style="color:#1a8a2a;font-weight:bold;top:-5px">c</span><span class="otx" style="left:60.30px;letter-spacing:-0.253px">Mountain(String, double, double)</span></div>
</div>
<div class="abs" style="left:610px;top:430px;width:186px;height:16px;background:linear-gradient(#d4d4d4,#f6f6f6 40%,#fcfcfc 65%,#e0e0e0);border-top:1px solid #cfcfcf"></div>
<div class="abs" style="left:626px;top:431px;width:157px;height:15px;border-radius:0 7.5px 7.5px 0;background:linear-gradient(#bcbcbc,#ececec 40%,#f8f8f8 65%,#cdcdcd)"></div>
<div class="abs" style="left:628px;top:431px;width:115px;height:14px;border-radius:7px;background:linear-gradient(to right,rgba(30,84,210,.85),rgba(30,84,210,0) 10px,rgba(30,84,210,0) calc(100% - 10px),rgba(30,84,210,.85)),linear-gradient(to bottom,#1c4cc4 0,#4a90ee 14%,#6cb0f6 36%,#b0e0ff 68%,#7cc0f8 86%,#4a78c4 100%);box-shadow:0 0 0 .6px #34509a"></div>
<svg class="abs" style="left:610px;top:430px" width="190" height="16"><path d="M13.4 4.4v7.2l-5.6-3.6z" fill="#2c2c2c"/><path d="M175.6 4.4v7.2l5.6-3.6z" fill="#2c2c2c"/></svg>
<svg class="abs" style="left:0;top:447px" width="800" height="30" viewBox="0 447 800 30">
<rect x="9.2" y="452" width="2.2" height="17" fill="#fdfdfd"/><rect x="11.4" y="452" width="1" height="17" fill="#b4b4b4"/>
<rect x="20.5" y="456.2" width="6" height="11.2" fill="#f6faff" stroke="#b8a070" stroke-width="1"/><rect x="20.5" y="456.2" width="6" height="2.4" fill="#4a86d0"/>
<g transform="translate(30.8 457.6) scale(.85)"><path d="M0 -4.2L1.2 -1.2L4.2 0L1.2 1.2L0 4.2L-1.2 1.2L-4.2 0L-1.2 -1.2z" fill="#ffe070" stroke="#c89a20" stroke-width=".8"/><path d="M0 -2v4M-2 0h4" stroke="#fff8d0" stroke-width="1"/></g>
<path d="M49.5 454v13M49.5 457.5h3M49.5 464h3" stroke="#7a88a8" stroke-width="1.3" fill="none"/>
<rect x="52.6" y="455.2" width="6.2" height="4.8" fill="#f0a050" stroke="#c06a20" stroke-width=".8"/><path d="M52.6 457.6h6.2M55.7 455.2v4.8" stroke="#c06a20" stroke-width=".6"/>
<rect x="52.6" y="461.6" width="6.2" height="4.8" fill="#f0a050" stroke="#c06a20" stroke-width=".8"/><path d="M52.6 464h6.2M55.7 461.6v4.8" stroke="#c06a20" stroke-width=".6"/>
<rect x="222.8" y="450" width="1" height="25" fill="#8e8e8e"/><rect x="223.8" y="450" width="1" height="25" fill="#f8f8f8"/>
<path d="M791 476l8-8M794 476l5-5M797 476l2-2" stroke="#9a9a9a" stroke-width="1"/>
</svg>
<div class="abs" style="left:231px;top:456px;font-size:11px;line-height:14px;color:#222">Writable</div>
<div id="menu" class="abs">
<div class="mi " style="top:4.00px;padding-left:21.50px;letter-spacing:-0.135px">Toggle Comment<span class="g" style="left:296.40px">⌘</span><span class="g" style="left:311.50px">/</span></div>
<div class="mi " style="top:22.80px;padding-left:21.50px;letter-spacing:-0.312px">Add Block Comment</div>
<div class="mi " style="top:41.60px;padding-left:20.50px;letter-spacing:-0.421px">Remove Block Comment<span class="g" style="left:283.85px;transform-origin:6px 50%;transform:scaleX(1.85)">⇧</span><span class="g" style="left:296.40px">⌘</span><span class="g" style="left:311.70px">\</span></div>
<div class="mi " style="top:60.90px;padding-left:20.50px;letter-spacing:-0.489px">Generate Element Comment<span class="g" style="left:282.25px;transform-origin:8px 50%;transform:scaleX(.864)">⌥</span><span class="g" style="left:296.40px">⌘</span><span class="g" style="left:312.00px">J</span></div>
<div class="sep" style="top:84.80px"></div>
<div class="mi " style="top:91.80px;padding-left:20.50px;letter-spacing:-0.211px">Correct Indentation<span class="g" style="left:296.40px">⌘</span><span class="g" style="left:310.50px">I</span></div>
<div class="mi " style="top:110.20px;padding-left:20.50px;letter-spacing:-0.26px">Format<span class="g" style="left:283.85px;transform-origin:6px 50%;transform:scaleX(1.85)">⇧</span><span class="g" style="left:296.40px">⌘</span><span class="g" style="left:310.50px">F</span></div>
<div class="sep" style="top:134.80px"></div>
<div class="mi " style="top:141.90px;padding-left:21.50px;letter-spacing:-0.256px">Add Import<span class="g" style="left:283.85px;transform-origin:6px 50%;transform:scaleX(1.85)">⇧</span><span class="g" style="left:296.40px">⌘</span><span class="g" style="left:310.50px">M</span></div>
<div class="mi " style="top:160.20px;padding-left:20.50px;letter-spacing:-0.12px">Organize Imports<span class="g" style="left:283.85px;transform-origin:6px 50%;transform:scaleX(1.85)">⇧</span><span class="g" style="left:296.40px">⌘</span><span class="g" style="left:310.20px">O</span></div>
<div class="mi " style="top:179.10px;padding-left:20.50px;letter-spacing:-0.229px">Sort Members...</div>
<div class="mi " style="top:197.90px;padding-left:20.50px;letter-spacing:-0.1px">Clean Up...</div>
<div class="sep" style="top:222.60px"></div>
<div class="mi " style="top:229.50px;padding-left:20.50px;letter-spacing:-0.118px">Override/Implement Methods...</div>
<div class="mi " style="top:248.90px;padding-left:20.50px;letter-spacing:-0.36px">Generate Getters and Setters...</div>
<div class="mi " style="top:267.20px;padding-left:20.50px;letter-spacing:-0.367px">Generate Delegate Methods...</div>
<div class="mi " style="top:286.10px;padding-left:20.50px;letter-spacing:-0.385px">Generate hashCode() and equals()...</div>
<div class="mi hl" style="top:304.90px;padding-left:20.50px;letter-spacing:-0.376px">Generate toString()...</div>
<div class="mi " style="top:323.80px;padding-left:20.50px;letter-spacing:-0.169px">Generate Constructor using Fields...</div>
<div class="mi " style="top:342.70px;padding-left:20.50px;letter-spacing:-0.231px">Generate Constructors from Superclass...</div>
<div class="sep" style="top:367.50px"></div>
<div class="mi " style="top:373.90px;padding-left:20.50px;letter-spacing:-0.162px">Externalize Strings...</div>
</div>
<svg class="abs" style="left:454.2px;top:388px" width="16" height="24" viewBox="0 0 16 24"><path d="M3 3v14.4l3.3-3.1 2.3 5.3 2.3-1-2.3-5.2h4.6z" fill="#000" stroke="#fff" stroke-width="1.1" stroke-linejoin="round"/></svg>
<div id="bottomedge" class="abs"></div>
</div></body></html>
